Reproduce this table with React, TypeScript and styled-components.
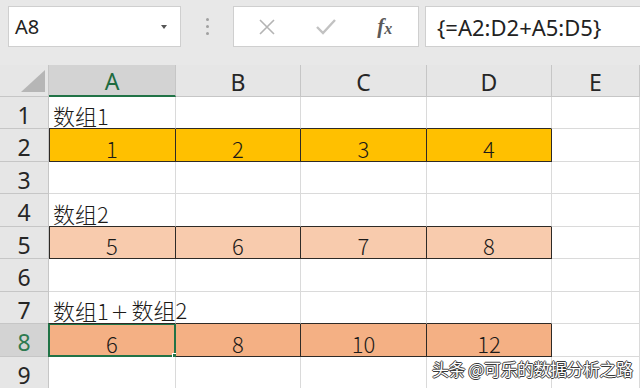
import styled, { createGlobalStyle, css } from 'styled-components';

const GRID = '#dadada';
const HEAD_LINE = '#c6c6c6';
const DARK = '#2e2a26';
const GREEN = '#217346';

const COLS = ['A', 'B', 'C', 'D', 'E'];
const ROW_HEIGHTS = [32, 33, 32, 33, 32, 33, 32, 33, 32];

type Fill = 'gold' | 'peach' | 'salmon';

const FILLS: Record<Fill, string> = {
  gold: '#ffc000',
  peach: '#f8cbad',
  salmon: '#f4b084',
};

type Row = { label?: string; values?: number[]; fill?: Fill };

const rows: Row[] = [
  { label: '数组1' },
  { values: [1, 2, 3, 4], fill: 'gold' },
  {},
  { label: '数组2' },
  { values: [5, 6, 7, 8], fill: 'peach' },
  {},
  { label: '数组1+数组2' },
  { values: [6, 8, 10, 12], fill: 'salmon' },
  {},
];

const SELECTED_ROW = 8;

// the "+" is drawn wider in the sheet's font, so give it some room
const renderLabel = (label: string) =>
  label.split('+').map((part, i) => (
    <span key={i}>
      {i > 0 && <Op>+</Op>}
      {part}
    </span>
  ));

const App = () => {
  return (
    <>
      <GlobalStyle />
      <Page>
        <Toolbar>
          <NameBox>
            <span>A8</span>
            <DropArrow />
          </NameBox>
          <Grip>
            <i />
            <i />
            <i />
          </Grip>
          <ButtonBox>
            <IconButton>
              <svg width="20" height="20" viewBox="0 0 20 20">
                <path d="M3 3 L17 17 M17 3 L3 17" stroke="#b4b4b4" strokeWidth="1.6" fill="none" />
              </svg>
            </IconButton>
            <IconButton>
              <svg width="22" height="20" viewBox="0 0 22 20">
                <path d="M2 10 L8 16 L20 3" stroke="#c2c2c2" strokeWidth="2.4" fill="none" />
              </svg>
            </IconButton>
            <Fx>
              f<sub>x</sub>
            </Fx>
          </ButtonBox>
          <FormulaBox>{'{=A2:D2+A5:D5}'}</FormulaBox>
        </Toolbar>

        <Sheet>
          <Corner>
            <svg width="24" height="22" viewBox="0 0 24 22">
              <polygon points="24,0 24,22 0,22" fill="#b6b6b6" />
            </svg>
          </Corner>
          {COLS.map((c) => (
            <ColHead key={c} $active={c === 'A'}>
              {c}
            </ColHead>
          ))}

          {rows.map((row, r) => {
            const num = r + 1;
            const below = rows[r + 1];
            return [
              <RowHead key={`h${num}`} $active={num === SELECTED_ROW}>
                {num}
              </RowHead>,
              ...COLS.map((c, ci) => {
                const filled = !!row.fill && ci < 4;
                const nextFilled = !!row.fill && ci < 3;
                const belowFilled = !!below?.fill && ci < 4;
                const hasLabel = ci === 0 && !!row.label;
                return (
                  <Cell
                    key={`${c}${num}`}
                    $fill={filled ? row.fill : undefined}
                    $darkRight={filled || nextFilled}
                    $darkBottom={filled || belowFilled}
                    $darkLeft={filled && ci === 0}
                    $center={!!row.values}
                    $spill={hasLabel}
                    $selected={num === SELECTED_ROW && ci === 0}
                  >
                    {hasLabel && renderLabel(row.label!)}
                    {row.values && ci < 4 ? row.values[ci] : null}
                  </Cell>
                );
              }),
            ];
          })}
        </Sheet>

        <Watermark>头条 @可乐的数据分析之路</Watermark>
      </Page>
    </>
  );
};

export default App;

const GlobalStyle = createGlobalStyle`
  body {
    margin: 0;
    background: #ffffff;
  }
`;

const Page = styled.div`
  position: relative;
  width: 640px;
  height: 388px;
  overflow: hidden;
  font-family: 'Noto Sans', 'Noto Sans CJK SC', sans-serif;
`;

const Toolbar = styled.div`
  height: 65px;
  box-sizing: border-box;
  padding: 6px 0 0 8px;
  display: flex;
  align-items: flex-start;
  background: #e8e8e8;
`;

const NameBox = styled.div`
  width: 173px;
  height: 41px;
  box-sizing: border-box;
  border: 1px solid #cfcfcf;
  background: #ffffff;
  display: flex;
  align-items: center;
  justify-content: space-between;
  padding: 0 13px 0 6px;
  font-size: 20px;
  color: #222222;
`;

const DropArrow = styled.span`
  width: 0;
  height: 0;
  border-left: 3.5px solid transparent;
  border-right: 3.5px solid transparent;
  border-top: 4px solid #555555;
`;

const Grip = styled.div`
  width: 52px;
  height: 41px;
  display: flex;
  flex-direction: column;
  align-items: center;
  justify-content: center;
  gap: 4px;

  i {
    width: 3px;
    height: 3px;
    border-radius: 50%;
    background: #a0a0a0;
  }
`;

const ButtonBox = styled.div`
  width: 186px;
  height: 41px;
  box-sizing: border-box;
  border: 1px solid #cfcfcf;
  background: #ffffff;
  display: flex;
  align-items: center;
  justify-content: space-around;
  padding: 0 4px;
`;

const IconButton = styled.div`
  width: 40px;
  display: flex;
  justify-content: center;
`;

const Fx = styled.div`
  width: 40px;
  text-align: center;
  font-family: 'Liberation Serif', serif;
  font-style: italic;
  font-weight: bold;
  font-size: 21px;
  color: #5a5a5a;

  sub {
    font-size: 16px;
    vertical-align: -1px;
  }
`;

const FormulaBox = styled.div`
  margin-left: 6px;
  flex: 1;
  height: 41px;
  box-sizing: border-box;
  border: 1px solid #cfcfcf;
  border-right: none;
  background: #ffffff;
  display: flex;
  align-items: center;
  padding-left: 11px;
  font-size: 22px;
  color: #222222;
  white-space: nowrap;
`;

const Sheet = styled.div`
  display: grid;
  grid-template-columns: 49px 127px 125px 126px 125px 1fr;
  grid-template-rows: 32px ${ROW_HEIGHTS.map((h) => `${h}px`).join(' ')};
`;

const Corner = styled.div`
  box-sizing: border-box;
  background: #e6e6e6;
  border-right: 1px solid ${HEAD_LINE};
  border-bottom: 1px solid ${HEAD_LINE};
  display: flex;
  align-items: flex-end;
  justify-content: flex-end;
  padding: 0 3px 4px 0;
`;

const ColHead = styled.div<{ $active?: boolean }>`
  box-sizing: border-box;
  background: ${({ $active }) => ($active ? '#d3d3d3' : '#e6e6e6')};
  border-right: 1px solid ${HEAD_LINE};
  border-bottom: ${({ $active }) => ($active ? `2px solid ${GREEN}` : `1px solid ${HEAD_LINE}`)};
  display: flex;
  align-items: center;
  justify-content: center;
  line-height: 1;
  font-size: 23px;
  color: ${({ $active }) => ($active ? '#1e6b40' : '#262626')};
  padding-top: 3px;
`;

const RowHead = styled.div<{ $active?: boolean }>`
  box-sizing: border-box;
  background: ${({ $active }) => ($active ? '#d3d3d3' : '#e6e6e6')};
  border-right: 1px solid ${HEAD_LINE};
  border-bottom: 1px solid ${HEAD_LINE};
  display: flex;
  align-items: center;
  justify-content: center;
  padding-top: 5px;
  line-height: 1;
  font-size: 23px;
  color: ${({ $active }) => ($active ? '#2e7a50' : '#262626')};
`;

const Cell = styled.div<{
  $fill?: Fill;
  $darkRight?: boolean;
  $darkBottom?: boolean;
  $darkLeft?: boolean;
  $center?: boolean;
  $spill?: boolean;
  $selected?: boolean;
}>`
  position: relative;
  z-index: ${({ $spill }) => ($spill ? 1 : 'auto')};
  box-sizing: border-box;
  background: ${({ $fill }) => ($fill ? FILLS[$fill] : '#ffffff')};
  border-right: 1px solid ${({ $darkRight }) => ($darkRight ? DARK : GRID)};
  border-bottom: 1px solid ${({ $darkBottom }) => ($darkBottom ? DARK : GRID)};
  box-shadow: ${({ $darkLeft }) => ($darkLeft ? `inset 1px 0 0 ${DARK}` : 'none')};
  display: flex;
  align-items: center;
  justify-content: ${({ $center }) => ($center ? 'center' : 'flex-start')};
  padding: 5px 0 0 ${({ $center }) => ($center ? 0 : 4)}px;
  line-height: 1;
  font-family: 'Noto Sans CJK SC', sans-serif;
  font-weight: 300;
  font-size: 22px;
  color: #1c1a18;
  white-space: nowrap;

  ${({ $selected }) =>
    $selected &&
    css`
      &::before {
        content: '';
        position: absolute;
        inset: -1px -1px -1px -1px;
        border: 2px solid ${GREEN};
        pointer-events: none;
      }
      &::after {
        content: '';
        position: absolute;
        right: -4px;
        bottom: -4px;
        width: 5px;
        height: 5px;
        background: ${GREEN};
        border: 1px solid #ffffff;
      }
    `}
`;

const Op = styled.span`
  margin: 0 3px 0 2px;
  font-family: 'DejaVu Sans', sans-serif;
  font-weight: 200;
  font-size: 21px;
`;

const Watermark = styled.div`
  position: absolute;
  left: 432px;
  top: 360px;
  line-height: 1;
  font-family: 'Noto Sans CJK SC', sans-serif;
  font-size: 17px;
  color: #ffffff;
  letter-spacing: -0.5px;
  text-shadow:
    1px 0 0 #3a3a3a,
    -1px 0 0 #3a3a3a,
    0 1px 0 #3a3a3a,
    0 -1px 0 #3a3a3a;
`;
